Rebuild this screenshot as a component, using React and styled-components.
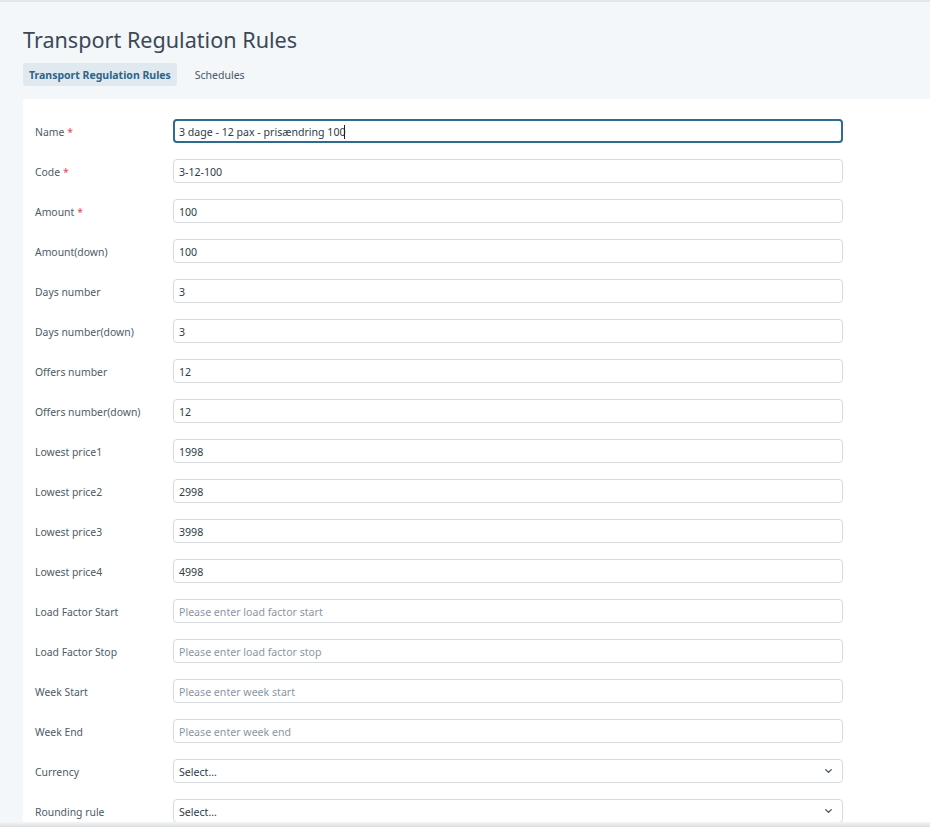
import React from "react"
import styled, { createGlobalStyle } from "styled-components"
import { ChevronDown } from "lucide-react"

const GlobalStyle = createGlobalStyle`
  html, body {
    margin: 0;
    padding: 0;
    background: #f3f7fa;
    overflow: hidden;
  }
  body {
    font-family: "Noto Sans", "Open Sans", sans-serif;
    color: #3e4c59;
  }
  * { box-sizing: border-box; }
`

const Page = styled.div`
  height: 827px;
  border-top: 2px solid #e1e6eb;
  padding: 0 0 0 23px;
  position: relative;
  overflow: hidden;
`

const Title = styled.h1`
  margin: 23px 0 0;
  font-size: 21.6px;
  font-weight: 400;
  line-height: 30px;
  color: #3b4856;
`

const Tabs = styled.div`
  display: flex;
  gap: 12px;
  margin-top: 8px;
`

const Tab = styled.div`
  height: 23px;
  padding: 1px 6px 0;
  border-radius: 3px;
  display: flex;
  align-items: center;
  font-size: 10.5px;
  font-weight: ${(p) => (p.$active ? 700 : 400)};
  color: ${(p) => (p.$active ? "#2d6488" : "#4a5663")};
  background: ${(p) => (p.$active ? "#e1e9f0" : "transparent")};
`

const Card = styled.div`
  margin-top: 13px;
  background: #fff;
  padding: 20px 0 0 12px;
  display: flex;
  flex-direction: column;
  gap: 16px;
  min-height: 800px;
`

const Row = styled.div`
  display: grid;
  grid-template-columns: 138px 670px;
  align-items: center;
  height: 24px;
`

const Label = styled.label`
  font-size: 10.4px;
  color: #4d5a67;
  padding-top: 1px;
`

const Req = styled.span`
  color: #e0475a;
  margin-left: 3px;
`

const Field = styled.div`
  position: relative;
  height: 24px;
  display: flex;
  align-items: center;
  border: ${(p) => (p.$focused ? "2px solid #2f6b8f" : "1px solid #d6dbe0")};
  border-radius: 4px;
  background: #fff;
  font-size: 10.6px;
  color: ${(p) => (p.$placeholder ? "#8a96a3" : "#2f3b47")};
  padding-left: ${(p) => (p.$focused ? "4px" : "5px")};
  padding-top: 1px;
`

const Caret = styled.span`
  display: inline-block;
  width: 1px;
  height: 14px;
  background: #222;
  margin-left: -2px;
`

const Chevron = styled.span`
  position: absolute;
  right: 8px;
  top: 50%;
  transform: translateY(-50%);
  display: flex;
  color: #4a5663;
`

const BottomShade = styled.div`
  position: absolute;
  left: 0;
  right: 0;
  bottom: 0;
  height: 5px;
  background: linear-gradient(#f4f5f6, #dcdfe2);
`

const rows = [
  { label: "Name", req: true, value: "3 dage - 12 pax - prisændring 100", focused: true },
  { label: "Code", req: true, value: "3-12-100" },
  { label: "Amount", req: true, value: "100" },
  { label: "Amount(down)", value: "100" },
  { label: "Days number", value: "3" },
  { label: "Days number(down)", value: "3" },
  { label: "Offers number", value: "12" },
  { label: "Offers number(down)", value: "12" },
  { label: "Lowest price1", value: "1998" },
  { label: "Lowest price2", value: "2998" },
  { label: "Lowest price3", value: "3998" },
  { label: "Lowest price4", value: "4998" },
  { label: "Load Factor Start", placeholder: "Please enter load factor start" },
  { label: "Load Factor Stop", placeholder: "Please enter load factor stop" },
  { label: "Week Start", placeholder: "Please enter week start" },
  { label: "Week End", placeholder: "Please enter week end" },
  { label: "Currency", select: true },
  { label: "Rounding rule", select: true },
]

export default function App() {
  return (
    <>
      <GlobalStyle />
      <Page>
        <Title>Transport Regulation Rules</Title>
        <Tabs>
          <Tab $active>Transport Regulation Rules</Tab>
          <Tab>Schedules</Tab>
        </Tabs>
        <Card>
          {rows.map((r) => (
            <Row key={r.label}>
              <Label>
                {r.label}
                {r.req && <Req>*</Req>}
              </Label>
              <Field $focused={r.focused} $placeholder={!!r.placeholder}>
                {r.select ? "Select..." : r.value || r.placeholder}
                {r.focused && <Caret />}
                {r.select && (
                  <Chevron>
                    <ChevronDown size={11} strokeWidth={3} />
                  </Chevron>
                )}
              </Field>
            </Row>
          ))}
        </Card>
        <BottomShade />
      </Page>
    </>
  )
}
